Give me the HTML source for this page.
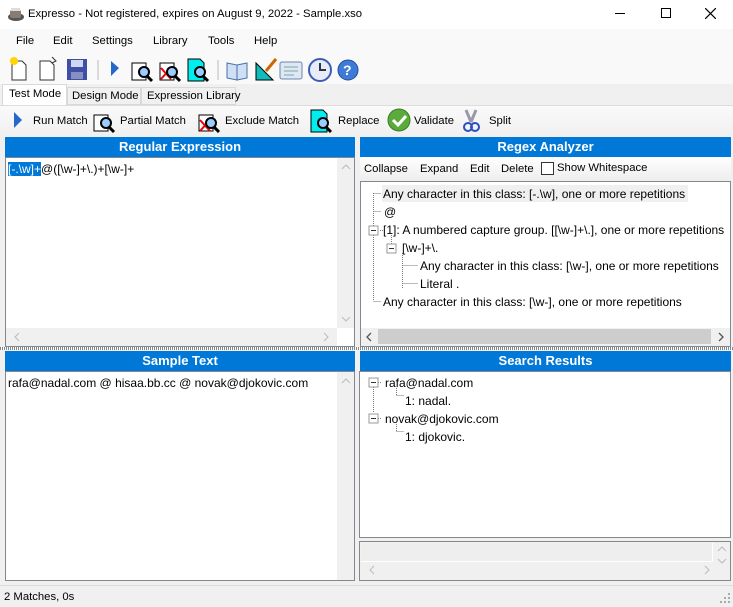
<!DOCTYPE html>
<html><head><meta charset="utf-8"><style>
*{margin:0;padding:0;box-sizing:border-box}
body{width:733px;height:607px;overflow:hidden;background:#f0f0f0;font-family:"Liberation Sans",sans-serif;font-size:12px;color:#000;position:relative}
.a{position:absolute}
.hdr{position:absolute;background:#0078d7;color:#fff;font-weight:bold;font-size:13px;text-align:center;height:20px;line-height:19px}
.box{position:absolute;background:#fff;border:1px solid #828790}
.t{position:absolute;white-space:nowrap;font-size:12px}
.u{font-size:11.3px}
.sb{position:absolute;background:#f0f0f0}
.m{stroke:#777;stroke-width:1;stroke-dasharray:1 1;fill:none}
</style></head><body>
<div class="a" style="left:0;top:0;width:733px;height:29px;background:#fff"></div>
<svg class="a" style="left:7px;top:6px" width="18" height="16"><ellipse cx="9" cy="11" rx="8" ry="4" fill="#555"/><rect x="3" y="4" width="11" height="8" rx="2" fill="#8a7b70"/><rect x="4" y="2" width="9" height="3" fill="#ddd"/></svg>
<div class="t u" style="left:28px;top:8px">Expresso - Not registered, expires on August 9, 2022 - Sample.xso</div>
<div class="a" style="left:615px;top:13px;width:10px;height:1px;background:#000"></div>
<div class="a" style="left:661px;top:8px;width:10px;height:10px;border:1px solid #000"></div>
<svg class="a" style="left:705px;top:8px" width="11" height="11"><path d="M0 0L11 11M11 0L0 11" stroke="#000" stroke-width="1.2"/></svg>
<div class="a" style="left:0;top:29px;width:733px;height:55px;background:#f9f9f9"></div>
<div class="t u" style="left:16px;top:35px">File</div><div class="t u" style="left:53px;top:35px">Edit</div><div class="t u" style="left:92px;top:35px">Settings</div><div class="t u" style="left:153px;top:35px">Library</div><div class="t u" style="left:208px;top:35px">Tools</div><div class="t u" style="left:254px;top:35px">Help</div>
<svg class="a" style="left:8px;top:55px" width="360" height="28">
<path d="M4 6h10l4 4v15H4z" fill="#fff" stroke="#333"/><circle cx="6" cy="6" r="4" fill="#ffd400"/>
<path d="M32 6h10l4 4v15H32z" fill="#fff" stroke="#333"/><path d="M44 2l4 4-4 2" fill="none" stroke="#333"/>
<rect x="59" y="4" width="20" height="21" fill="#3d4fa6"/><rect x="63" y="5" width="12" height="7" fill="#cfd6f0"/><rect x="63" y="17" width="12" height="7" fill="#8890c0"/>
<line x1="90" y1="5" x2="90" y2="25" stroke="#bbb"/>
<path d="M103 6l8 7-8 8z" fill="#2469c9"/>
<path d="M124 8h14v17h-14z" fill="#fff" stroke="#000"/><circle cx="136" cy="17" r="5" fill="#9cf" stroke="#000" stroke-width="2"/><line x1="139" y1="21" x2="144" y2="26" stroke="#000" stroke-width="3"/>
<path d="M152 8h14v17h-14z" fill="#fff" stroke="#000"/><path d="M153 13l10 11M163 13l-10 11" stroke="#e00" stroke-width="2"/><circle cx="164" cy="17" r="5" fill="#9cf" stroke="#000" stroke-width="2"/><line x1="167" y1="21" x2="172" y2="26" stroke="#000" stroke-width="3"/>
<path d="M180 4h12l4 4v18h-16z" fill="#0ee" stroke="#000"/><circle cx="192" cy="17" r="5" fill="#9cf" stroke="#000" stroke-width="2"/><line x1="195" y1="21" x2="200" y2="26" stroke="#000" stroke-width="3"/>
<line x1="210" y1="5" x2="210" y2="25" stroke="#bbb"/>
<path d="M219 8l10 2v15l-10-2zM229 10l10-2v15l-10 2z" fill="#cfe0f5" stroke="#4a6fa5"/>
<path d="M248 25V8l17 17z" fill="#1bb" stroke="#000"/><line x1="258" y1="16" x2="268" y2="4" stroke="#c60" stroke-width="3"/>
<rect x="272" y="7" width="22" height="17" rx="2" fill="#dfe7f2" stroke="#6a86b0"/><path d="M276 12h14M276 16h14M276 20h10" stroke="#7aa"/>
<circle cx="312" cy="15" r="11" fill="#e8ecfa" stroke="#3b5bb5" stroke-width="2"/><path d="M312 8v7h6" stroke="#334" stroke-width="2" fill="none"/>
<circle cx="340" cy="15" r="10" fill="#3e7bd6" stroke="#1c4fa0"/><text x="335" y="20" fill="#fff" font-size="14" font-weight="bold" font-family="Liberation Sans">?</text>
</svg>
<div class="a" style="left:0;top:84px;width:733px;height:21px;background:#f0f0f0"></div>
<div class="a" style="left:2px;top:84px;width:65px;height:22px;background:#fff;border:1px solid #d9d9d9;border-bottom:none"></div>
<div class="t u" style="left:9px;top:88px">Test Mode</div>
<div class="a" style="left:67px;top:87px;width:74px;height:18px;border:1px solid #d9d9d9;background:#f0f0f0"></div>
<div class="t u" style="left:72px;top:90px">Design Mode</div>
<div class="a" style="left:141px;top:87px;width:95px;height:18px;border:1px solid #d9d9d9;background:#f0f0f0"></div>
<div class="t u" style="left:147px;top:90px">Expression Library</div>
<div class="a" style="left:0;top:105px;width:733px;height:31px;background:linear-gradient(#fafafa,#f0f0f0);border-top:1px solid #ddd"></div>
<svg class="a" style="left:8px;top:108px" width="510" height="26">
<path d="M6 4l8 8-8 8z" fill="#2469c9"/>
<path d="M86 7h14v16h-14z" fill="#fff" stroke="#000"/><circle cx="98" cy="15" r="5" fill="#9cf" stroke="#000" stroke-width="2"/><line x1="101" y1="19" x2="106" y2="24" stroke="#000" stroke-width="3"/>
<path d="M191 7h14v16h-14z" fill="#fff" stroke="#000"/><path d="M192 12l10 11M202 12l-10 11" stroke="#e00" stroke-width="2"/><circle cx="203" cy="15" r="5" fill="#9cf" stroke="#000" stroke-width="2"/><line x1="206" y1="19" x2="211" y2="24" stroke="#000" stroke-width="3"/>
<path d="M303 2h12l4 4v18h-16z" fill="#0ee" stroke="#000"/><circle cx="315" cy="15" r="5" fill="#9cf" stroke="#000" stroke-width="2"/><line x1="318" y1="19" x2="323" y2="24" stroke="#000" stroke-width="3"/>
<circle cx="391" cy="12" r="11" fill="#5bab3c" stroke="#3a7d25"/><path d="M385 12l5 5 8-9" stroke="#fff" stroke-width="3" fill="none"/>
<path d="M458 2l5 12M468 2l-5 12" stroke="#99a" stroke-width="3"/><circle cx="460" cy="19" r="4" fill="none" stroke="#2a4fc0" stroke-width="2"/><circle cx="467" cy="19" r="4" fill="none" stroke="#2a4fc0" stroke-width="2"/>
</svg>
<div class="t u" style="left:33px;top:115px">Run Match</div>
<div class="t u" style="left:120px;top:115px">Partial Match</div>
<div class="t u" style="left:225px;top:115px">Exclude Match</div>
<div class="t u" style="left:338px;top:115px">Replace</div>
<div class="t u" style="left:414px;top:115px">Validate</div>
<div class="t u" style="left:489px;top:115px">Split</div>

<div class="hdr" style="left:5px;top:137px;width:350px">Regular Expression</div>
<div class="box" style="left:5px;top:157px;width:350px;height:190px"></div>
<div class="sb" style="left:337px;top:158px;width:17px;height:170px"></div>
<div class="sb" style="left:6px;top:328px;width:331px;height:18px"></div>
<svg class="a" style="left:337px;top:158px" width="17" height="170"><path d="M5 11l4-4 4 4M5 159l4 4 4-4" stroke="#bbb" fill="none"/></svg>
<svg class="a" style="left:6px;top:328px" width="331" height="18"><path d="M13 5l-4 4 4 4M318 5l4 4-4 4" stroke="#bbb" fill="none"/></svg>
<div class="a" style="left:8px;top:162px;width:33px;height:14px;background:#0078d7"></div>
<div class="t" style="left:8px;top:162px"><span style="color:#fff">[-.\w]+</span>@([\w-]+\.)+[\w-]+</div>

<div class="a" style="left:0;top:347px;width:733px;height:3px;background:repeating-linear-gradient(90deg,#888 0 1px,#fff 1px 2px)"></div>
<div class="hdr" style="left:5px;top:351px;width:350px">Sample Text</div>
<div class="box" style="left:5px;top:371px;width:350px;height:210px"></div>
<div class="sb" style="left:337px;top:372px;width:17px;height:208px"></div>
<svg class="a" style="left:337px;top:372px" width="17" height="20"><path d="M5 11l4-4 4 4" stroke="#bbb" fill="none"/></svg>
<div class="t" style="left:8px;top:376px">rafa@nadal.com @ hisaa.bb.cc @ novak@djokovic.com</div>

<div class="hdr" style="left:360px;top:137px;width:371px">Regex Analyzer</div>
<div class="a" style="left:360px;top:157px;width:371px;height:23px;background:linear-gradient(#fff,#eee)"></div>
<div class="t u" style="left:364px;top:163px">Collapse</div><div class="t u" style="left:420px;top:163px">Expand</div><div class="t u" style="left:470px;top:163px">Edit</div><div class="t u" style="left:501px;top:163px">Delete</div>
<div class="a" style="left:541px;top:162px;width:13px;height:13px;border:1px solid #333;background:#fff"></div>
<div class="t u" style="left:557px;top:162px">Show Whitespace</div>
<div class="box" style="left:360px;top:181px;width:371px;height:166px"></div>
<div class="a" style="left:382px;top:185px;width:306px;height:17px;background:#f0f0f0"></div>
<svg class="a" style="left:360px;top:181px" width="371" height="140">
<path class="m" d="M13.5 12v108M13.5 12.5h8M13.5 30.5h8M13.5 120.5h8M20 49.5h4M31.5 54v13M31.5 66.5h5M42.5 72v36M42.5 84.5h15M42.5 102.5h15"/>
<rect x="9" y="45" width="9" height="9" fill="#fff" stroke="#999"/><path d="M11 49.5h5" stroke="#333"/>
<rect x="27" y="63" width="9" height="9" fill="#fff" stroke="#999"/><path d="M29 67.5h5" stroke="#333"/>
</svg>
<div class="t" style="left:383px;top:187px">Any character in this class: [-.\w], one or more repetitions</div>
<div class="t" style="left:384px;top:205px">@</div>
<div class="t" style="left:383px;top:223px">[1]: A numbered capture group. [[\w-]+\.], one or more repetitions</div>
<div class="t" style="left:402px;top:241px">[\w-]+\.</div>
<div class="t" style="left:420px;top:259px">Any character in this class: [\w-], one or more repetitions</div>
<div class="t" style="left:420px;top:277px">Literal .</div>
<div class="t" style="left:383px;top:295px">Any character in this class: [\w-], one or more repetitions</div>
<div class="sb" style="left:361px;top:328px;width:369px;height:18px"></div>
<div class="a" style="left:378px;top:329px;width:333px;height:15px;background:#cdcdcd"></div>
<svg class="a" style="left:361px;top:328px" width="369" height="18"><path d="M10 5l-4 4 4 4M358 5l4 4-4 4" stroke="#555" fill="none" stroke-width="1.3"/></svg>

<div class="hdr" style="left:360px;top:351px;width:371px">Search Results</div>
<div class="box" style="left:359px;top:371px;width:372px;height:167px"></div>
<svg class="a" style="left:360px;top:372px" width="100" height="80">
<path class="m" d="M13.5 15v26M18 10.5h4M18 46.5h4M36.5 16v7M36.5 23.5h7M36.5 52v7M36.5 59.5h7"/>
<rect x="9" y="6" width="9" height="9" fill="#fff" stroke="#999"/><path d="M11 10.5h5" stroke="#333"/>
<rect x="9" y="42" width="9" height="9" fill="#fff" stroke="#999"/><path d="M11 46.5h5" stroke="#333"/>
</svg>
<div class="t" style="left:385px;top:376px">rafa@nadal.com</div>
<div class="t" style="left:405px;top:394px">1: nadal.</div>
<div class="t" style="left:385px;top:412px">novak@djokovic.com</div>
<div class="t" style="left:405px;top:430px">1: djokovic.</div>
<div class="a" style="left:359px;top:541px;width:372px;height:40px;border:1px solid #888;background:#f0f0f0"></div>
<div class="a" style="left:361px;top:543px;width:352px;height:19px;background:#eee;border-right:1px solid #fff;border-bottom:1px solid #fff"></div>
<svg class="a" style="left:359px;top:541px" width="372" height="40"><path d="M359 10l4-4 4 4M359 18l4 4 4-4M15 25l-4 4 4 4M346 25l4 4-4 4" stroke="#bbb" fill="none"/></svg>

<div class="a" style="left:0;top:585px;width:733px;height:1px;background:#dadada"></div>
<div class="t u" style="left:4px;top:591px">2 Matches, 0s</div>
<svg class="a" style="left:719px;top:592px" width="12" height="12"><g fill="#aaa"><rect x="9" y="1" width="2" height="2"/><rect x="5" y="5" width="2" height="2"/><rect x="9" y="5" width="2" height="2"/><rect x="1" y="9" width="2" height="2"/><rect x="5" y="9" width="2" height="2"/><rect x="9" y="9" width="2" height="2"/></g></svg>
</body></html>
